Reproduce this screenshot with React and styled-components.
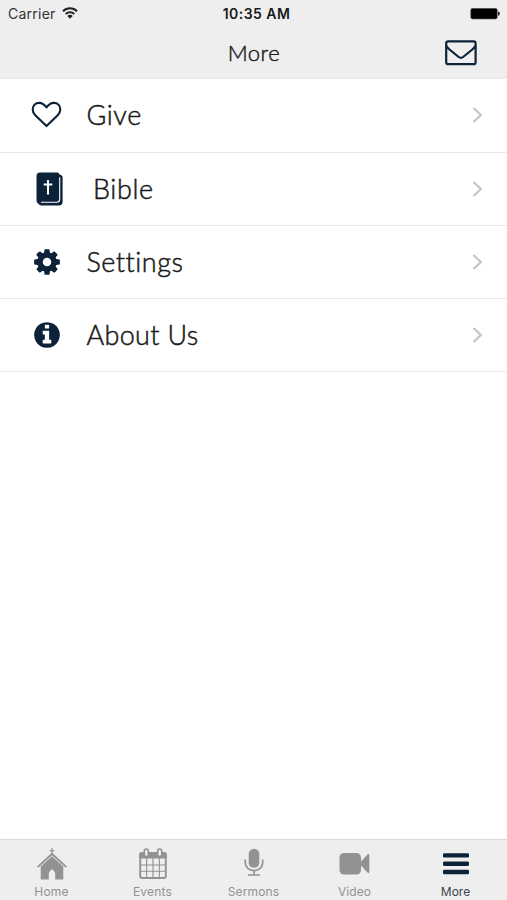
import React from "react";
import styled, { createGlobalStyle } from "styled-components";

const NAVY = "#0c2238";
const GREY = "#929292";

const GlobalStyle = createGlobalStyle`
  * {
    box-sizing: border-box;
  }
  body {
    margin: 0;
    background: #fff;
  }
`;

const Screen = styled.div`
  display: flex;
  flex-direction: column;
  width: 100%;
  height: 900px;
  overflow: hidden;
  background: #fff;
  color: #1a1a1a;
`;

const Header = styled.header`
  height: 79px;
  flex: none;
  background: #eeeeee;
  border-bottom: 1px solid #e8e8e8;
`;

const StatusBar = styled.div`
  display: grid;
  grid-template-columns: 1fr auto 1fr;
  align-items: center;
  height: 27px;
  padding: 0 7px 0 8px;
  font-family: Inter, "Liberation Sans", sans-serif;
  font-size: 14px;
  line-height: 27px;
`;

const Carrier = styled.div`
  display: flex;
  align-items: center;
  gap: 6px;
  color: #333;
  letter-spacing: 0.25px;
`;

const Clock = styled.div`
  color: #1a1a1a;
  font-weight: 600;
  letter-spacing: 0.45px;
  padding-left: 5px;
`;

const BatterySlot = styled.div`
  display: flex;
  justify-content: flex-end;
`;

const NavBar = styled.div`
  display: grid;
  grid-template-columns: 1fr auto 1fr;
  align-items: center;
  height: 51px;
  padding: 0 30px;
`;

const Title = styled.h1`
  grid-column: 2;
  margin: 0;
  padding-left: 1px;
  font-family: Lato, "Open Sans", sans-serif;
  font-size: 22px;
  font-weight: 300;
  line-height: 49px;
  letter-spacing: 0.5px;
  -webkit-text-stroke: 0.45px currentColor;
`;

const MailButton = styled.button`
  justify-self: end;
  display: flex;
  padding: 0;
  border: 0;
  background: none;
`;

const List = styled.ul`
  flex: 1;
  margin: 0;
  padding: 0;
  list-style: none;
`;

const Row = styled.li`
  display: flex;
  align-items: center;
  height: 73.25px;
  padding: 0 24px 0 ${(props) => (props.$inset ? 34 : 31)}px;
  border-bottom: 1px solid #e8e8e8;

  &:first-child {
    height: 73.5px;
  }
`;

const IconSlot = styled.div`
  display: flex;
  justify-content: center;
  width: 31px;
  margin-right: ${(props) => (props.$inset ? 28 : 24.5)}px;
`;

const Label = styled.span`
  flex: 1;
  font-family: Lato, "Open Sans", sans-serif;
  font-size: 27px;
  font-weight: 300;
  line-height: 36px;
  letter-spacing: ${(props) => props.$spacing}px;
  -webkit-text-stroke: 0.5px currentColor;
`;

const TabBar = styled.nav`
  display: grid;
  grid-template-columns: repeat(5, 101px);
  justify-content: center;
  flex: none;
  height: 61px;
  background: #eeeeee;
  border-top: 1px solid #d9d9d9;
`;

const Tab = styled.div`
  display: flex;
  flex-direction: column;
  align-items: center;
  padding-top: 7px;
  color: ${(props) => (props.$active ? "#3c444d" : GREY)};
  font-family: Inter, "Liberation Sans", sans-serif;
  font-size: 12px;
  line-height: 16px;
  letter-spacing: ${(props) => props.$spacing}px;

  svg {
    margin-bottom: 3px;
  }
`;

const Wifi = () => (
  <svg width="16" height="13" viewBox="0 0 16 13" fill="none" stroke="#222" strokeWidth="2">
    <path d="M1 4.2a10 10 0 0 1 14 0M3.7 7a6.2 6.2 0 0 1 8.6 0" />
    <path d="M8 11.8L5.3 9.1a3.8 3.8 0 0 1 5.4 0z" fill="#222" stroke="none" />
  </svg>
);

const Battery = () => (
  <svg width="30" height="12" viewBox="0 0 30 12">
    <rect x="0.7" y="0.3" width="26.6" height="10.8" rx="1.8" fill="#000" stroke="#777" strokeWidth="0.6" />
    <path d="M28 3.6c2.4.3 2.4 3.9 0 4.2z" fill="#222" />
  </svg>
);

const Mail = () => (
  <svg width="32" height="26" viewBox="0 0 32 26" fill="none" stroke={NAVY} strokeWidth="2.2" strokeLinejoin="round">
    <rect x="1.2" y="1.4" width="29.4" height="22.8" rx="2" />
    <path d="M1.5 6c.8 1.5 1.7 2.4 3 3.5l9.2 7.5c1.5 1.2 2.9 1.2 4.400 0l9.200-7.500c1.300-1.100 2.200-2 3-3.500" />
  </svg>
);

const Heart = () => (
  <svg width="31" height="28" viewBox="0 0 31 28" fill="none" stroke={NAVY} strokeWidth="2.1" strokeLinejoin="round">
    <path d="M15.5 25.100L4.300 14.200C2.600 12.500 1.700 10.800 1.700 8.500c0-4 2.500-6.600 6.600-6.600 2.900 0 5 1.700 7.200 4.500 2.200-2.800 4.300-4.500 7.200-4.500 4.100 0 6.600 2.600 6.600 6.600 0 2.300-.9 4-2.600 5.700z" />
  </svg>
);

const Bible = () => (
  <svg width="27" height="34" viewBox="0 0 27 34">
    <path d="M4 .5h16.8c1.5 0 2 .6 2.5 1.7l2 1.1c1 .5 1.3 1.2 1.3 2.4v24.1c0 2.3-1.3 3.7-3.6 3.7H6.2c-1.5 0-2.5-.3-3.4-1.2L1.3 30.7C.7 30 .5 29.2 .5 28V4C.5 1.8 1.8 .5 4 .5z" fill={NAVY} />
    <path d="M23.7 5.300V27.300c0 2-1.100 3-3 3H5" fill="none" stroke="#fff" strokeWidth="1.100" />
    <path d="M12 8V22.500M7.700 12.500H16.300" stroke="#fff" strokeWidth="2" />
  </svg>
);

const Cog = () => (
  <svg width="30" height="30" viewBox="0 0 1792 1792" fill={NAVY}>
    <path d="M1152 896q0-106-75-181t-181-75-181 75-75 181 75 181 181 75 181-75 75-181zm512-109v222q0 12-8 23t-20 13l-185 28q-19 54-39 91 35 50 107 138 10 12 10 25t-9 23q-27 37-99 108t-94 71q-12 0-26-9l-138-108q-44 23-91 38-16 136-29 186-7 28-36 28h-222q-14 0-24.5-8.5t-11.5-21.5l-28-184q-49-16-90-37l-141 107q-10 9-25 9-14 0-25-11-126-114-165-168-7-10-7-23 0-12 8-23 15-21 51-66.5t54-70.5q-27-50-41-99l-183-27q-13-2-21-12.500t-8-23.500v-222q0-12 8-23t19-13l186-28q14-46 39-92-40-57-107-138-10-12-10-24 0-10 9-23 26-36 98.500-107.500t94.500-71.500q13 0 26 10l138 107q44-23 91-38 16-136 29-186 7-28 36-28h222q14 0 24.500 8.500t11.500 21.500l28 184q49 16 90 37l142-107q9-9 24-9 13 0 25 10 129 119 165 170 7 8 7 22 0 12-8 23-15 21-51 66.500t-54 70.500q26 50 41 98l183 28q13 2 21 12.500t8 23.500z" />
  </svg>
);

const Info = () => (
  <svg width="30" height="30" viewBox="0 0 1792 1792" fill={NAVY}>
    <path d="M1152 1376v-160q0-14-9-23t-23-9h-96v-512q0-14-9-23t-23-9h-320q-14 0-23 9t-9 23v160q0 14 9 23t23 9h96v320h-96q-14 0-23 9t-9 23v160q0 14 9 23t23 9h448q14 0 23-9t9-23zm-128-896v-160q0-14-9-23t-23-9h-192q-14 0-23 9t-9 23v160q0 14 9 23t23 9h192q14 0 23-9t9-23zm640 416q0 209-103 385.5t-279.5 279.5-385.5 103-385.5-103-279.5-279.5-103-385.5 103-385.5 279.5-279.5 385.5-103 385.5 103 279.5 279.5 103 385.5z" />
  </svg>
);

const Chevron = () => (
  <svg width="12" height="18" viewBox="0 0 12 18" fill="none" stroke="#c4c4c4" strokeWidth="2.2">
    <path d="M2.5 2l7.3 7-7.3 7" />
  </svg>
);

const Church = () => (
  <svg width="32" height="34" viewBox="0 0 32 34" fill={GREY}>
    <path d="M15.4 1h1.2v2h1.6v1.2h-1.6v3.2h-1.2V4.2h-1.6V3h1.6z" />
    <path d="M16 5.4L31 19.5l-1.2 1.2L16 8.2 2.2 20.7 1 19.5z" />
    <path d="M16 9.3l11.3 10.3V32.5h-8.1v-5.3c0-2.2-1.3-3.8-3.2-5-1.9 1.2-3.2 2.8-3.2 5v5.3H4.7V19.6z" />
  </svg>
);

const Calendar = () => (
  <svg width="30" height="34" viewBox="0 0 30 34">
    <rect x="2.2" y="6.5" width="25.6" height="24.5" rx="2" fill="#eee" stroke={GREY} strokeWidth="1.9" />
    <path d="M1.2 11.5V7.5q0-2.5 2.5-2.5h22.6q2.5 0 2.5 2.5v4z" fill={GREY} />
    <path d="M2 18h26M2 24.3h26M8.6 11v20M15 11v20M21.4 11v20" stroke={GREY} strokeWidth="1.1" />
    <g fill="#eee" stroke={GREY} strokeWidth="1.6">
      <rect x="6.300" y="2" width="4" height="7.500" rx="2" />
      <rect x="19.700" y="2" width="4" height="7.500" rx="2" />
    </g>
  </svg>
);

const Microphone = () => (
  <svg width="20" height="34" viewBox="0 0 20 34" fill="none" stroke={GREY} strokeWidth="1.7">
    <rect x="4.700" y="1.700" width="10.600" height="19" rx="5.300" fill={GREY} stroke="none" />
    <path d="M1.300 12.500v3c0 5 3.700 8.200 8.700 8.200s8.700-3.200 8.700-8.200v-3M10 24v4M4 28h12" />
  </svg>
);

const Camera = () => (
  <svg width="31" height="34" viewBox="0 0 31 34" fill={GREY}>
    <rect x="0.500" y="6" width="21.500" height="21.500" rx="4.500" />
    <path d="M22 14.500l6.700-7.200q1.600-1 1.600.7v17q0 1.700-1.600.7L22 18.500z" />
  </svg>
);

const Bars = () => (
  <svg width="26" height="34" viewBox="0 0 26 34" fill={NAVY}>
    <rect y="6.200" width="26" height="4.400" rx="1.300" />
    <rect y="14.500" width="26" height="4.400" rx="1.300" />
    <rect y="22.800" width="26" height="4.400" rx="1.300" />
  </svg>
);

const items = [
  { label: "Give", icon: Heart, spacing: 0.6 },
  { label: "Bible", icon: Bible, spacing: 0.6, inset: true },
  { label: "Settings", icon: Cog, spacing: 0.5 },
  { label: "About Us", icon: Info, spacing: 0.35 },
];

const tabs = [
  { label: "Home", icon: Church, spacing: 0.2 },
  { label: "Events", icon: Calendar, spacing: 0.2 },
  { label: "Sermons", icon: Microphone, spacing: 0.15 },
  { label: "Video", icon: Camera, spacing: 0.1 },
  { label: "More", icon: Bars, spacing: 0, active: true },
];

function App() {
  return (
    <Screen>
      <GlobalStyle />
      <Header>
        <StatusBar>
          <Carrier>
            Carrier
            <Wifi />
          </Carrier>
          <Clock>10:35 AM</Clock>
          <BatterySlot>
            <Battery />
          </BatterySlot>
        </StatusBar>
        <NavBar>
          <Title>More</Title>
          <MailButton aria-label="Messages">
            <Mail />
          </MailButton>
        </NavBar>
      </Header>

      <List>
        {items.map(({ label, icon: Icon, spacing, inset }) => (
          <Row key={label} $inset={inset}>
            <IconSlot $inset={inset}>
              <Icon />
            </IconSlot>
            <Label $spacing={spacing}>{label}</Label>
            <Chevron />
          </Row>
        ))}
      </List>

      <TabBar>
        {tabs.map(({ label, icon: Icon, spacing, active }) => (
          <Tab key={label} $active={active} $spacing={spacing}>
            <Icon />
            {label}
          </Tab>
        ))}
      </TabBar>
    </Screen>
  );
}

export default App;
